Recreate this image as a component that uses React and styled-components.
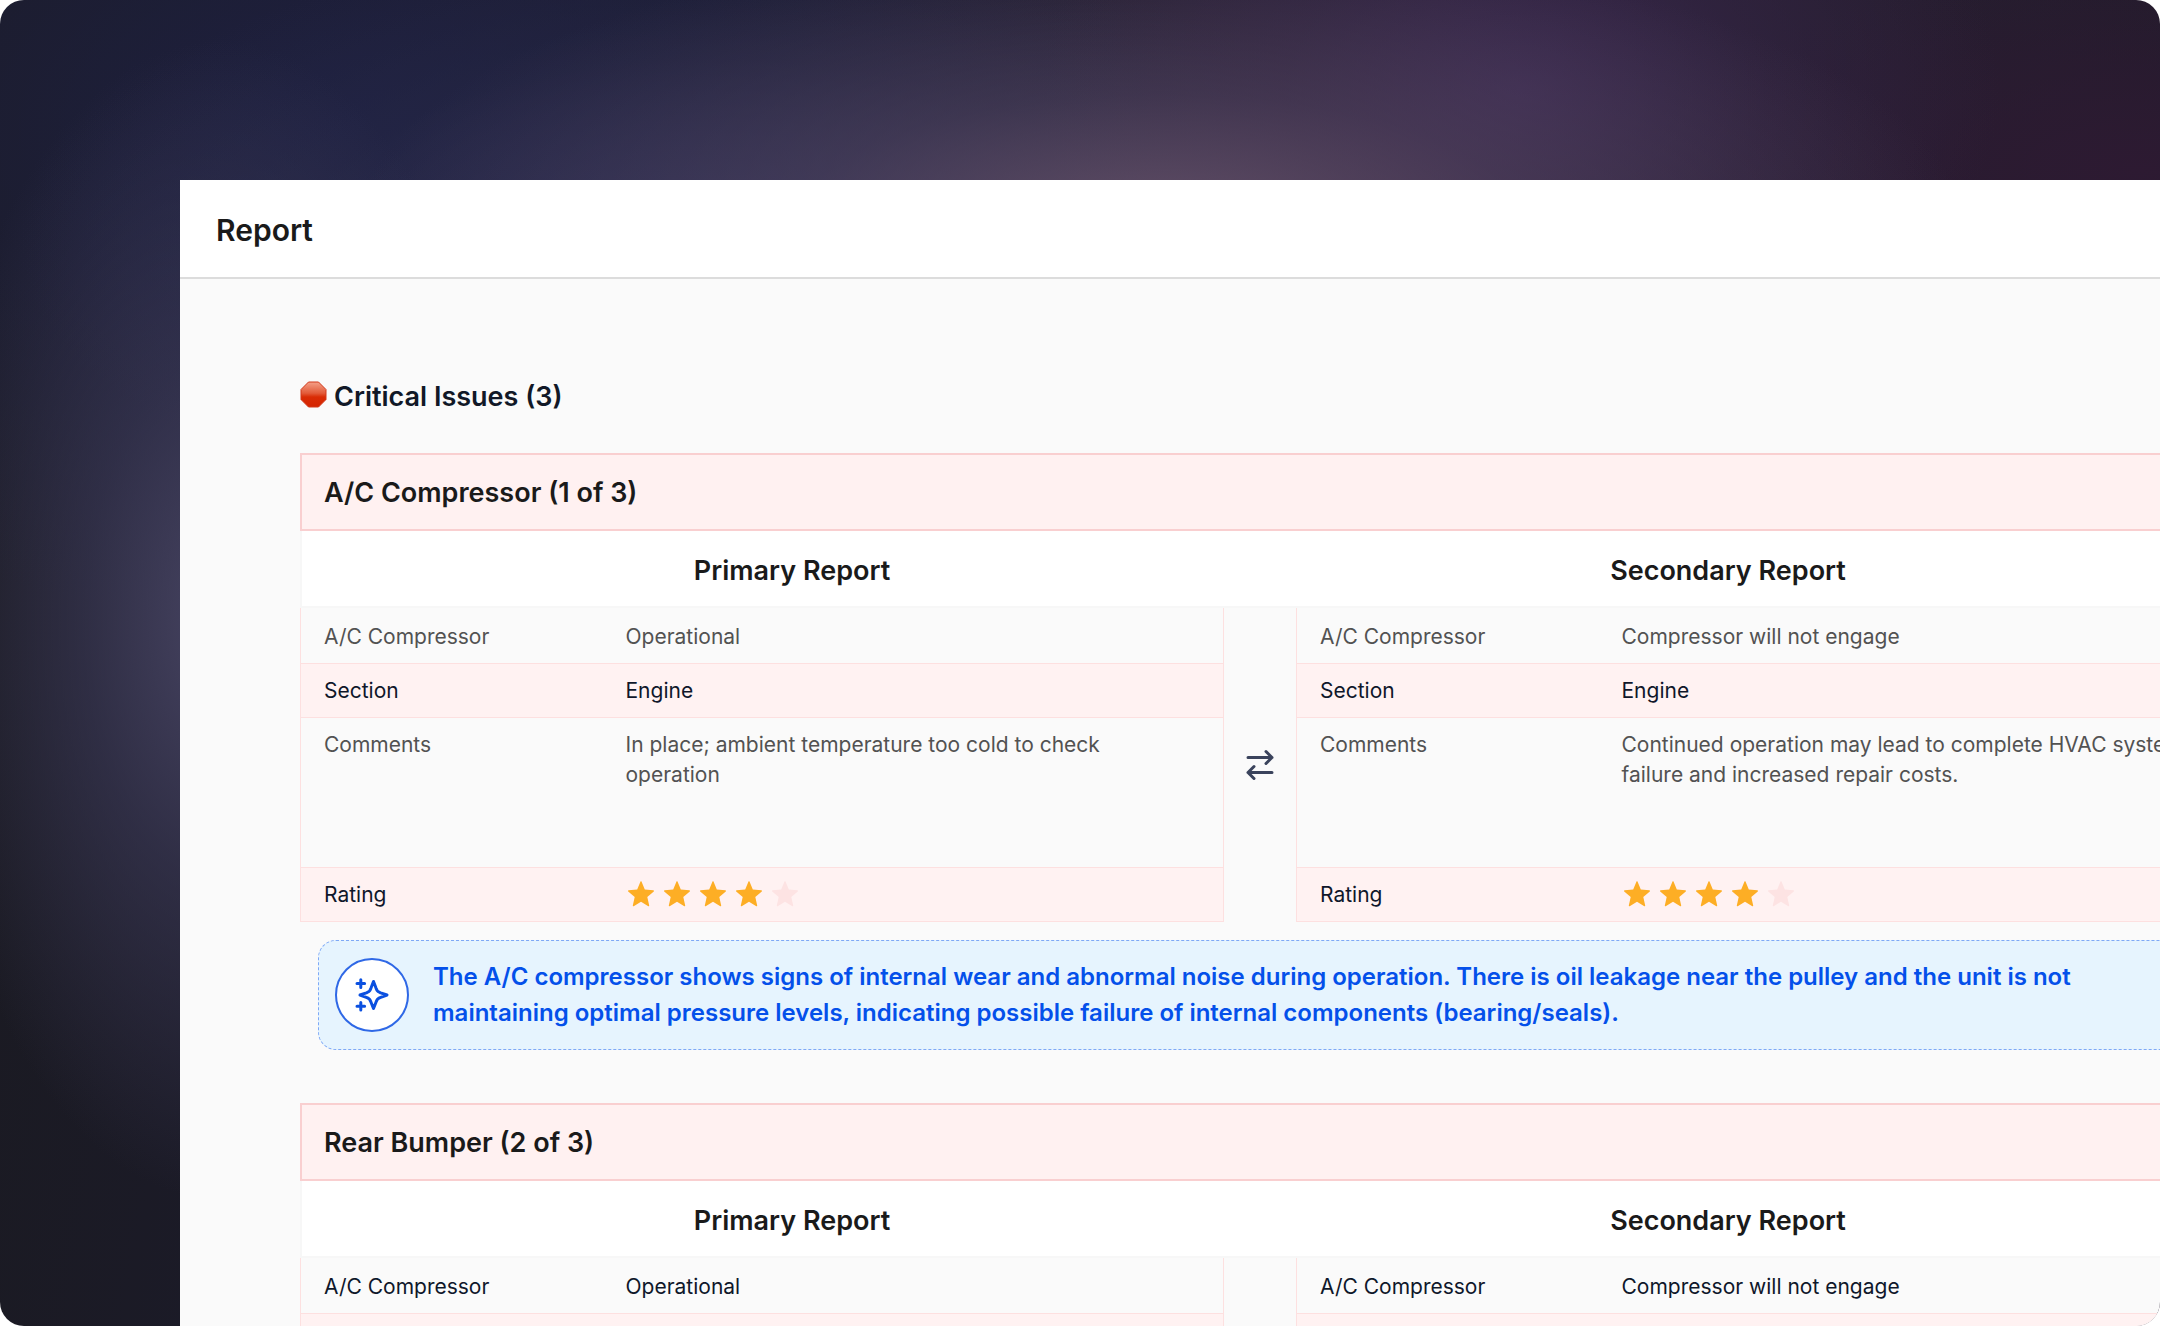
import React from "react";
import styled, { createGlobalStyle } from "styled-components";

const GlobalStyle = createGlobalStyle`
  * {
    box-sizing: border-box;
  }

  body {
    margin: 0;
    background: #ffffff;
    font-family: Inter, "Liberation Sans", sans-serif;
    color: #1a1a1a;
  }
`;

const Backdrop = styled.div`
  height: 100vh;
  padding: 180px 0 0 180px;
  overflow: hidden;
  border-radius: 24px;
  background:
    radial-gradient(ellipse 800px 280px at 1160px 220px, #66526ae6 0%, #56486280 45%, transparent 100%),
    radial-gradient(ellipse 300px 580px at 220px 620px, #4b4868e6 0%, #3d3b5a99 45%, transparent 100%),
    radial-gradient(ellipse 480px 320px at 1520px 90px, #3e2b56cc 0%, #35264880 50%, transparent 100%),
    radial-gradient(ellipse 700px 300px at 720px 240px, #33345ccc 0%, #26284880 60%, transparent 100%),
    radial-gradient(ellipse 800px 500px at 350px 130px, #1e2040 0%, transparent 100%),
    radial-gradient(ellipse 500px 200px at 2140px 170px, #2d1a32 0%, transparent 100%),
    linear-gradient(100deg, #1a1a20 0%, #1c1b2c 30%, #2a2034 60%, #221a2a 100%);
`;

/* As wide as the window, so the right part runs out of view */
const Panel = styled.main`
  width: 100vw;
  min-height: 100%;
  background: #fafafa;
`;

const PanelHeader = styled.header`
  display: flex;
  align-items: center;
  height: 99px;
  padding: 2px 36px 0;
  background: #ffffff;
  border-bottom: 2px solid #dcdcdc;
`;

const Title = styled.h1`
  margin: 0;
  font-size: 30px;
  line-height: 42px;
  font-weight: 600;
`;

const Content = styled.div`
  padding: 97px 120px;
`;

const GroupTitle = styled.h2`
  display: flex;
  align-items: flex-start;
  gap: 7px;
  margin: 0 0 35px;
  font-size: 27px;
  line-height: 42px;
  font-weight: 600;
  color: #111827;
`;

const StopSign = styled.svg`
  width: 27px;
  height: 27px;
  margin-top: 5px;
`;

const Issue = styled.section`
  margin-bottom: 53px;
`;

const IssueTitle = styled.h3`
  margin: 0;
  padding: 18px 22px 16px;
  font-size: 27px;
  line-height: 40px;
  font-weight: 600;
  background: #fff1f1;
  border: 2px solid #f9cfd0;
`;

const ReportNames = styled.div`
  display: grid;
  grid-template-columns: 1fr 1fr;
  padding: 20px 22px 15px;
  background: #ffffff;
  border: 2px solid #f7f7f7;
  border-top: 0;
`;

const ReportName = styled.h4`
  margin: 0;
  font-size: 27px;
  line-height: 40px;
  font-weight: 600;
  text-align: center;
`;

const Compare = styled.div`
  display: grid;
  grid-template-columns: 1fr 72px 1fr;
`;

const Details = styled.table`
  width: 100%;
  border-collapse: collapse;
  table-layout: fixed;
  border: 1px solid #fde0e0;
  border-top: 0;
  font-size: 21px;
  line-height: 30px;
`;

const Label = styled.th`
  width: 301px;
  padding: 12px 24px 11px 23px;
  font-weight: 400;
  text-align: left;
  vertical-align: top;
`;

const Value = styled.td`
  padding: 12px 24px 11px;
  vertical-align: top;
`;

const Row = styled.tr`
  height: ${({ $tall }) => ($tall ? "150px" : "54px")};
  color: ${({ $muted }) => ($muted ? "#525252" : "#0f172a")};
  background: ${({ $tinted }) => ($tinted ? "#fff2f2" : "transparent")};
  border-bottom: 1px solid #fde0e0;

  &:first-child > * {
    padding-top: 14px;
  }
`;

const Stars = styled.div`
  display: flex;
  align-items: center;
  gap: 6px;
  height: 30px;
`;

const StarIcon = styled.svg`
  width: 30px;
  height: 30px;
  fill: ${({ $on }) => ($on ? "#fdae25" : "#fde3e3")};
`;

const Swap = styled.div`
  display: flex;
  align-items: center;
  justify-content: center;
`;

const Summary = styled.aside`
  display: flex;
  align-items: center;
  gap: 24px;
  margin: 18px 18px 0;
  padding: 17px 16px;
  background: #e6f4fe;
  border: 1px dashed #7ea8f6;
  border-radius: 18px;
`;

const SummaryIcon = styled.span`
  display: flex;
  flex: none;
  align-items: center;
  justify-content: center;
  width: 74px;
  height: 74px;
  background: #ffffff;
  border: 2px solid #2f68e6;
  border-radius: 50%;
`;

const SummaryText = styled.p`
  margin: 0;
  font-size: 24px;
  line-height: 36px;
  font-weight: 600;
  color: #0450ea;
`;

const issues = [
  {
    title: "A/C Compressor (1 of 3)",
    muted: true,
    primary: {
      state: "Operational",
      section: "Engine",
      comments: "In place; ambient temperature too cold to check operation",
      rating: 4,
    },
    secondary: {
      state: "Compressor will not engage",
      section: "Engine",
      comments:
        "Continued operation may lead to complete HVAC system failure and increased repair costs.",
      rating: 4,
    },
    summary:
      "The A/C compressor shows signs of internal wear and abnormal noise during operation. There is oil leakage near the pulley and the unit is not maintaining optimal pressure levels, indicating possible failure of internal components (bearing/seals).",
  },
  {
    title: "Rear Bumper (2 of 3)",
    muted: false,
    primary: { state: "Operational", section: "Engine" },
    secondary: { state: "Compressor will not engage", section: "Engine" },
  },
];

function Star({ on }) {
  return (
    <StarIcon $on={on} viewBox="0 1 30 30" aria-hidden="true">
      <path d="M14.500 2.500c.2-.5.8-.5 1 0l3.300 7.900 8.600.8c.6.1.8.8.4 1.200l-6.500 5.700 1.900 8.500c.1.6-.4.9-.9.600L15 22.700l-7.300 4.500c-.5.3-1 0-.9-.6l1.900-8.500-6.500-5.700c-.4-.4-.2-1.100.4-1.200l8.600-.8z" />
    </StarIcon>
  );
}

function ReportTable({ name, report, muted }) {
  return (
    <Details aria-label={name}>
      <tbody>
        <Row $muted={muted}>
          <Label scope="row">A/C Compressor</Label>
          <Value>{report.state}</Value>
        </Row>
        <Row $tinted>
          <Label scope="row">Section</Label>
          <Value>{report.section}</Value>
        </Row>
        {report.comments && (
          <Row $tall $muted={muted}>
            <Label scope="row">Comments</Label>
            <Value>{report.comments}</Value>
          </Row>
        )}
        {report.rating && (
          <Row $tinted>
            <Label scope="row">Rating</Label>
            <Value>
              <Stars role="img" aria-label={`${report.rating} out of 5`}>
                {[1, 2, 3, 4, 5].map((n) => (
                  <Star key={n} on={n <= report.rating} />
                ))}
              </Stars>
            </Value>
          </Row>
        )}
      </tbody>
    </Details>
  );
}

function SwapIcon() {
  return (
    <svg
      width="36"
      height="36"
      viewBox="0 0 36 36"
      fill="none"
      stroke="#3a435c"
      strokeWidth="3"
      strokeLinecap="round"
      strokeLinejoin="round"
      aria-hidden="true"
    >
      <path d="M6 10.500h24M24 4.500l6 6-6 6" />
      <path d="M30 25.500h-24M12 19.500l-6 6 6 6" />
    </svg>
  );
}

function SparkleIcon() {
  return (
    <svg
      width="36"
      height="36"
      viewBox="0 0 36 36"
      fill="none"
      stroke="#0b50e0"
      strokeWidth="3"
      strokeLinecap="round"
      strokeLinejoin="round"
      aria-hidden="true"
    >
      <path d="M19.500 4.500l2.600 6.800c.5 1.200.7 1.800 1.100 2.300.3.400.7.800 1.200 1.100.5.400 1.100.6 2.300 1.100l6.300 2.200-6.300 2.400c-1.200.5-1.800.7-2.300 1.100-.5.3-.9.700-1.200 1.200-.4.500-.6 1.100-1.100 2.300l-2.600 6.500-2.600-6.500c-.5-1.200-.7-1.800-1.100-2.300-.3-.5-.7-.9-1.200-1.200-.5-.4-1.100-.6-2.300-1.100L6 18l6.300-2.200c1.200-.5 1.800-.7 2.300-1.100.5-.3.9-.7 1.200-1.100.4-.5.600-1.100 1.100-2.300z" />
      <path d="M6.800 2.800v7.600M3 6.600h7.600M6.800 25.400v7.600M3 29.200h7.600" />
    </svg>
  );
}

export default function App() {
  return (
    <>
      <GlobalStyle />
      <Backdrop>
        <Panel>
          <PanelHeader>
            <Title>Report</Title>
          </PanelHeader>
          <Content>
            <GroupTitle>
              <StopSign viewBox="0 0 27 27" aria-hidden="true">
                <defs>
                  <linearGradient id="stop" x1="0" y1="0" x2="0" y2="1">
                    <stop offset="0" stopColor="#f4a088" />
                    <stop offset="0.45" stopColor="#e25a38" />
                    <stop offset="0.6" stopColor="#d92c05" />
                    <stop offset="1" stopColor="#d42400" />
                  </linearGradient>
                </defs>
                <path
                  d="M8.500 1h10L26 8.500v10L18.500 26h-10L1 18.500v-10z"
                  fill="url(#stop)"
                  stroke="#d2381a"
                  strokeLinejoin="round"
                />
              </StopSign>
              Critical Issues (3)
            </GroupTitle>
            {issues.map((issue) => (
              <Issue key={issue.title}>
                <IssueTitle>{issue.title}</IssueTitle>
                <ReportNames>
                  <ReportName>Primary Report</ReportName>
                  <ReportName>Secondary Report</ReportName>
                </ReportNames>
                <Compare>
                  <ReportTable name="Primary Report" report={issue.primary} muted={issue.muted} />
                  <Swap>{issue.summary && <SwapIcon />}</Swap>
                  <ReportTable name="Secondary Report" report={issue.secondary} muted={issue.muted} />
                </Compare>
                {issue.summary && (
                  <Summary>
                    <SummaryIcon>
                      <SparkleIcon />
                    </SummaryIcon>
                    <SummaryText>{issue.summary}</SummaryText>
                  </Summary>
                )}
              </Issue>
            ))}
          </Content>
        </Panel>
      </Backdrop>
    </>
  );
}
